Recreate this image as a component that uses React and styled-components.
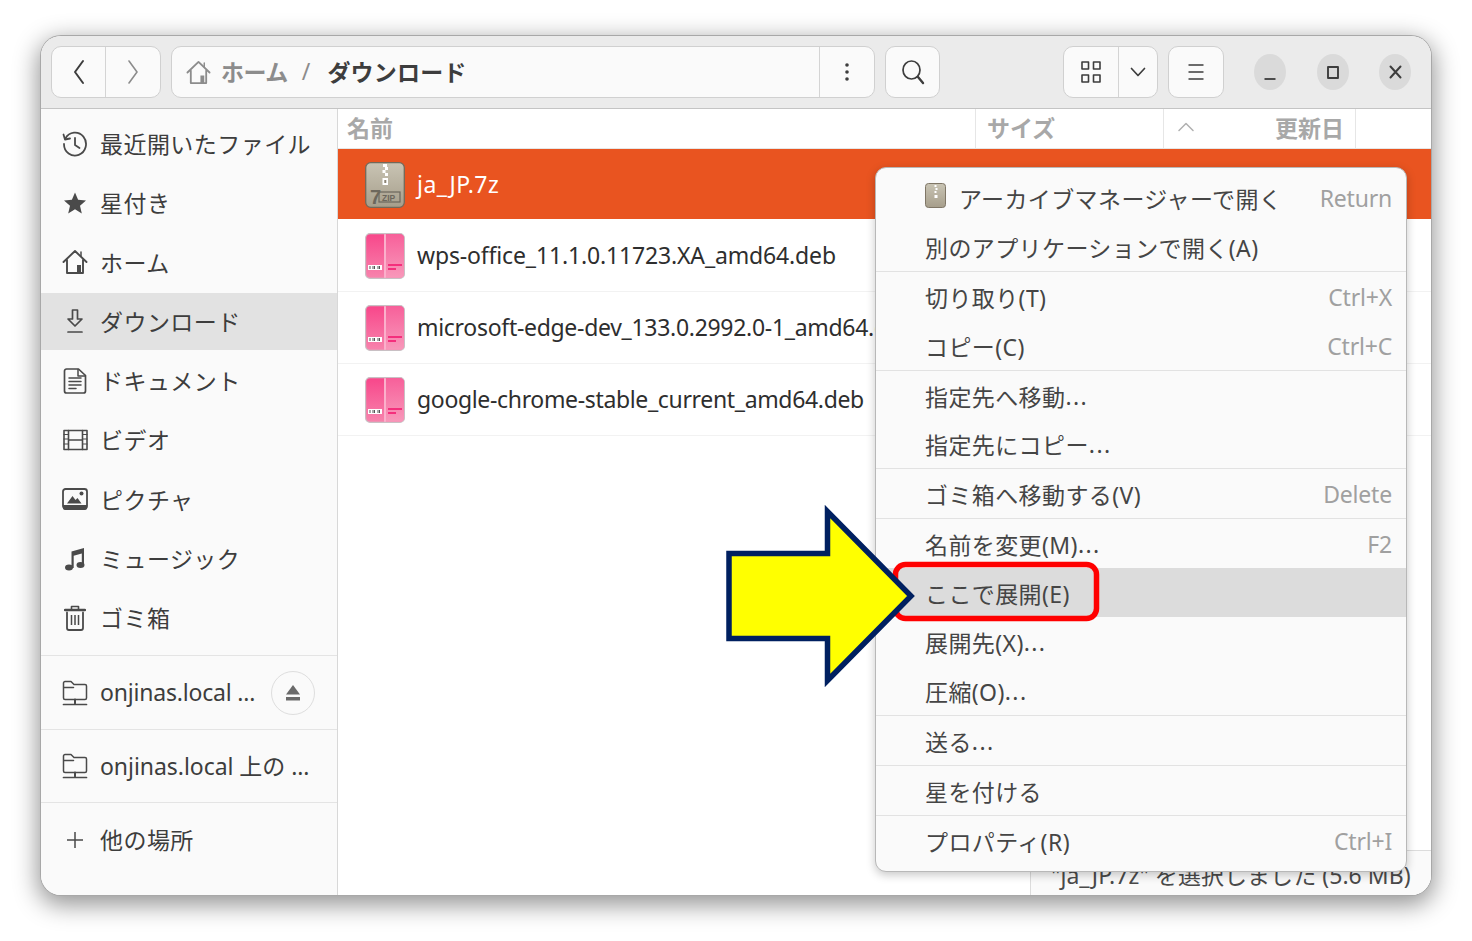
import React from "react";
import styled, { createGlobalStyle } from "styled-components";

const FONT = '"Noto Sans", "Noto Sans CJK JP", sans-serif';

const Global = createGlobalStyle`
  html, body { margin: 0; padding: 0; background: #fff; }
  body { font-family: ${FONT}; }
  * { box-sizing: border-box; }
`;

const Page = styled.div`
  width: 1472px;
  height: 941px;
  padding: 36px 41px 46px;
  overflow: hidden;
`;
const Win = styled.div`
  position: relative;
  width: 1390px;
  height: 859px;
  border-radius: 20px;
  background: #fff;
  box-shadow: 0 0 0 1px #a8a8a8, 0 7px 24px 3px rgba(0, 0, 0, 0.42);
  display: flex;
  flex-direction: column;
`;
const Header = styled.header`
  height: 73px;
  flex: none;
  display: flex;
  align-items: flex-start;
  padding: 10px 20px 0 10px;
  background: #ebebeb;
  border-bottom: 1px solid #c4c4c4;
  border-radius: 20px 20px 0 0;
`;
const BtnGroup = styled.div`
  display: flex;
  height: 52px;
  background: #fafafa;
  border: 1px solid #d0d0d0;
  border-radius: 10px;
  margin-right: ${(p) => p.$mr || 0}px;
  width: ${(p) => p.$w || "auto"}${(p) => (p.$w ? "px" : "")};
  flex: none;
  overflow: hidden;
`;
const Btn = styled.div`
  width: ${(p) => p.$w}px;
  flex: none;
  display: flex;
  align-items: center;
  justify-content: center;
  border-left: ${(p) => (p.$sep ? "1px solid #d4d4d4" : "none")};
  color: ${(p) => p.$color || "#3d3d3d"};
`;
const PathTrail = styled.div`
  flex: 1;
  display: flex;
  align-items: center;
  padding-left: 14px;
  font-size: 23px;
  font-weight: 700;
  color: #8c8c8c;
`;
const PathHome = styled.span`
  margin: -2px 0 0 10px;
  letter-spacing: -0.5px;
`;
const PathSlash = styled.span`
  margin: -2px 17px 0 14px;
  font-weight: 400;
`;
const PathCurrent = styled.span`
  margin-top: -2px;
  letter-spacing: 0.2px;
  color: #3d3d3d;
`;
const Spacer = styled.div`
  flex: 1;
`;
const WinButton = styled.div`
  width: 32px;
  height: 36px;
  border-radius: 50%;
  background: #dadada;
  margin: 8px 0 0 ${(p) => p.$ml}px;
  flex: none;
  display: flex;
  align-items: center;
  justify-content: center;
  color: #3d3d3d;
`;
const Body = styled.div`
  flex: 1;
  min-height: 0;
  display: flex;
`;
const Side = styled.aside`
  width: 297px;
  flex: none;
  background: #fafafa;
  border-right: 1px solid #d8d8d8;
  border-radius: 0 0 0 20px;
  padding-top: 6px;
  font-size: 23px;
  color: #3d3d3d;
`;
const SideItem = styled.div`
  height: 57px;
  margin-bottom: 2.3px;
  display: flex;
  align-items: center;
  padding-left: 20px;
  background: ${(p) => (p.$active ? "#e2e2e2" : "transparent")};
`;
const SideIcon = styled.span`
  width: 28px;
  height: 30px;
  flex: none;
  margin-right: 11px;
  display: flex;
  align-items: center;
  justify-content: center;
  color: #4a4a4a;
`;
const SideSep = styled.div`
  height: 1px;
  background: #e4e4e4;
  margin-top: ${(p) => p.$mt || 0}px;
`;
const SideRow = styled.div`
  height: ${(p) => p.$h}px;
  display: flex;
  align-items: center;
  padding-left: 20px;
`;
const SideText = styled.span`
  flex: 1;
  margin-top: ${(p) => p.$mt ?? -1}px;
  white-space: nowrap;
  letter-spacing: ${(p) => p.$ls}px;
`;
const Eject = styled.span`
  width: 44px;
  height: 44px;
  border: 1px solid #dedede;
  border-radius: 50%;
  margin-right: 22px;
  display: flex;
  align-items: center;
  justify-content: center;
  color: #6a6a6a;
`;
const Main = styled.main`
  flex: 1;
  min-width: 0;
  position: relative;
  background: #fff;
  border-radius: 0 0 20px 0;
`;
const ColHead = styled.div`
  height: 40px;
  display: flex;
  font-size: 23px;
  font-weight: 700;
  color: #a8a8a8;
  border-bottom: 1px solid #e6e6e6;
`;
const Col = styled.div`
  width: ${(p) => p.$w}px;
  flex: none;
  display: flex;
  align-items: center;
  padding: 0 ${(p) => p.$pr || 0}px 4px ${(p) => p.$pl || 0}px;
  justify-content: space-between;
  border-right: ${(p) => (p.$sep ? "1px solid #e6e6e6" : "none")};
`;
const FileRow = styled.div`
  height: ${(p) => p.$h}px;
  display: flex;
  align-items: center;
  padding-left: 27px;
  font-size: 23px;
  white-space: nowrap;
  color: ${(p) => (p.$selected ? "#fff" : "#2e2e2e")};
  background: ${(p) => (p.$selected ? "linear-gradient(#e95420 70px, #fff 70px)" : "#fff")};
  border-bottom: ${(p) => (p.$selected ? "none" : "1px solid #f2f2f2")};
`;
const FileName = styled.span`
  margin: -2px 0 0 12px;
  letter-spacing: ${(p) => p.$ls}px;
`;
const Status = styled.div`
  position: absolute;
  right: 0;
  bottom: 0;
  width: 401px;
  height: 45px;
  padding: 9px 0 0 20px;
  font-size: 23px;
  line-height: 30px;
  letter-spacing: 0.05px;
  white-space: nowrap;
  color: #4a4a4a;
  background: #fafafa;
  border-top: 1px solid #dcdcdc;
  border-left: 1px solid #dcdcdc;
  border-radius: 0 0 20px 0;
`;
const Menu = styled.div`
  position: absolute;
  left: 834px;
  top: 131px;
  width: 532px;
  height: 705px;
  padding: 5px 0;
  background: #fafafa;
  border: 1px solid #b8b8b8;
  border-radius: 11px;
  box-shadow: 0 3px 10px rgba(0, 0, 0, 0.22);
  font-size: 23px;
  color: #454545;
`;
const MenuRow = styled.div`
  height: 48.9px;
  display: flex;
  align-items: center;
  justify-content: space-between;
  padding: 1px 14px 0 49px;
  white-space: nowrap;
  background: ${(p) => (p.$hl ? "#dcdcdc" : "transparent")};
`;
const MenuLabel = styled.span`
  display: flex;
  align-items: center;
  letter-spacing: 0.4px;
`;
const Dots = styled.span`
  letter-spacing: 1.4px;
`;
const MenuIcon = styled.span`
  display: flex;
  margin-right: 13px;
  margin-top: -4px;
`;
const Shortcut = styled.span`
  color: #a0a0a0;
  letter-spacing: -0.2px;
`;
const MenuSep = styled.div`
  height: 1px;
  background: #e2e2e2;
`;
const Callout = styled.svg`
  position: absolute;
  left: 0;
  top: 0;
  pointer-events: none;
`;

const S = { fill: "none", stroke: "currentColor", strokeWidth: 2, strokeLinecap: "round", strokeLinejoin: "round" };

const Back = () => (
  <svg width="14" height="26" viewBox="0 0 14 26"><path d="M11 2 3 13l8 11" {...S} /></svg>
);
const Forward = () => (
  <svg width="14" height="26" viewBox="0 0 14 26"><path d="M3 2l8 11-8 11" {...S} strokeWidth="1.6" /></svg>
);
const Home = ({ size = 26 }) => (
  <svg width={size} height={size} viewBox="0 0 26 26">
    <path d="M1.5 13 13 2l11.500 11M5 11v13h16V11" {...S} strokeWidth="1.900" />
    <path d="M15 24v-8h4v8z" fill="currentColor" />
    <path d="M19 3v4" {...S} strokeWidth="1.500" />
  </svg>
);
const Kebab = () => (
  <svg width="6" height="20" viewBox="0 0 6 20">
    <circle cx="3" cy="3" r="1.800" fill="currentColor" />
    <circle cx="3" cy="10" r="1.800" fill="currentColor" />
    <circle cx="3" cy="17" r="1.800" fill="currentColor" />
  </svg>
);
const Search = () => (
  <svg width="24" height="26" viewBox="0 0 24 26">
    <ellipse cx="10.500" cy="11" rx="8.500" ry="9" {...S} strokeWidth="1.700" />
    <path d="M17 18l5 6" {...S} strokeWidth="2.400" />
  </svg>
);
const Grid = () => (
  <svg width="20" height="22" viewBox="0 0 20 22">
    <g {...S} strokeWidth="1.600" strokeLinecap="butt">
      <rect x="1" y="1" width="6.500" height="7" />
      <rect x="12.500" y="1" width="6.500" height="7" />
      <rect x="1" y="14" width="6.500" height="7" />
      <rect x="12.500" y="14" width="6.500" height="7" />
    </g>
  </svg>
);
const Chevron = () => (
  <svg width="16" height="12" viewBox="0 0 16 12"><path d="M1.500 2.500 8 9.500l6.500-7" {...S} strokeWidth="1.700" /></svg>
);
const Burger = () => (
  <svg width="16" height="18" viewBox="0 0 16 18"><path d="M0.500 2h15M0.500 9h15M0.500 16h15" {...S} strokeWidth="1.700" strokeLinecap="butt" /></svg>
);
const Minimize = () => (
  <svg width="12" height="18" viewBox="0 0 12 18"><path d="M0.500 16h11" {...S} strokeWidth="1.800" strokeLinecap="butt" /></svg>
);
const Maximize = () => (
  <svg width="12" height="13" viewBox="0 0 12 13"><rect x="1" y="1" width="10" height="11" {...S} strokeWidth="1.900" strokeLinecap="butt" /></svg>
);
const CloseX = () => (
  <svg width="13" height="14" viewBox="0 0 13 14"><path d="M1.500 1.500l10 11M11.500 1.500l-10 11" {...S} strokeWidth="2" /></svg>
);
const Clock = () => (
  <svg width="26" height="26" viewBox="0 0 26 26">
    <path d="M3.400 7.500A11 11.500 0 1 1 2 13" {...S} strokeWidth="1.800" />
    <path d="M1.500 3.500 3 8.500 8 7.500" {...S} strokeWidth="1.800" />
    <path d="M13 7v7l4.500 3" {...S} strokeWidth="1.800" />
  </svg>
);
const Star = () => (
  <svg width="24" height="24" viewBox="0 0 24 24">
    <path d="M12 1.500l3.100 7.300 7.900.7-6 5.200 1.800 7.800L12 18.300 5.200 22.500 7 14.700 1 9.500l7.900-.7z" fill="currentColor" />
  </svg>
);
const DownloadIco = () => (
  <svg width="20" height="26" viewBox="0 0 20 26">
    <path d="M7.500 2h5v9H17l-7 7-7-7h4.500zM3 24h14" {...S} strokeWidth="1.700" />
  </svg>
);
const Doc = () => (
  <svg width="24" height="26" viewBox="0 0 24 26">
    <path d="M3.500 1h12L22.500 7.500V23a2 2 0 0 1-2 2h-17a2 2 0 0 1-2-2V3a2 2 0 0 1 2-2z" {...S} strokeWidth="1.700" />
    <path d="M15 1.500V8h7M6 10h12M6 13.500h12M6 17h12M6 20.500h7" {...S} strokeWidth="1.500" />
  </svg>
);
const Film = () => (
  <svg width="25" height="22" viewBox="0 0 25 22">
    <path d="M1 1.500h23v19H1z" {...S} strokeWidth="1.600" />
    <path d="M5.500 1.500v19M19.500 1.500v19M5.500 11h14" {...S} strokeWidth="1.600" />
    <path d="M1 5.500h4M1 10h4M1 15h4M20 5.500h4M20 10h4M20 15h4" {...S} strokeWidth="1.200" />
  </svg>
);
const Picture = () => (
  <svg width="26" height="22" viewBox="0 0 26 22">
    <rect x="1" y="1" width="24" height="19.500" rx="2.500" {...S} strokeWidth="1.800" />
    <path d="M1 17h24v3a2 2 0 0 1-2 2H3a2 2 0 0 1-2-2z" fill="currentColor" />
    <path d="M5 15.500 10.500 8l3 4 2-2 4 5.500z" fill="currentColor" />
    <circle cx="19.500" cy="5.500" r="2" fill="currentColor" />
  </svg>
);
const Music = () => (
  <svg width="22" height="24" viewBox="0 0 22 24">
    <path d="M7.500 4.500 20 1v17h-2.200V6.500L9.700 8.700V21H7.500z" fill="currentColor" />
    <ellipse cx="5" cy="20.500" rx="4" ry="3" fill="currentColor" />
    <ellipse cx="16.500" cy="18" rx="4" ry="3" fill="currentColor" />
  </svg>
);
const Trash = () => (
  <svg width="22" height="26" viewBox="0 0 22 26">
    <path d="M1 5h20" {...S} strokeWidth="2.400" />
    <path d="M7.500 4V1.500h7V4" {...S} strokeWidth="1.600" />
    <path d="M3 7.500V23a2 2 0 0 0 2 2h12a2 2 0 0 0 2-2V7.500" {...S} strokeWidth="1.800" />
    <path d="M7.500 10v10M11 10v10M14.500 10v10" {...S} strokeWidth="1.500" strokeLinecap="butt" />
  </svg>
);
const NetFolder = () => (
  <svg width="26" height="26" viewBox="0 0 26 26">
    <path d="M1.500 18V3a1.500 1.500 0 0 1 1.500-1.500h6L12 4.500h11A1.500 1.500 0 0 1 24.500 6v12A1.500 1.500 0 0 1 23 19.500H3A1.500 1.500 0 0 1 1.500 18zM1.500 7.500h10" {...S} strokeWidth="1.500" />
    <path d="M1.500 24.500h23" {...S} strokeWidth="1.700" />
    <path d="M13 19.500v4" {...S} strokeWidth="2" />
  </svg>
);
const Plus = () => (
  <svg width="18" height="18" viewBox="0 0 18 18"><path d="M9 1v16M1 9h16" {...S} strokeWidth="1.500" strokeLinecap="butt" /></svg>
);
const EjectIco = () => (
  <svg width="14" height="16" viewBox="0 0 14 16">
    <path d="M7 0l7 9.500H0z" fill="currentColor" />
    <rect y="12" width="14" height="3.500" fill="currentColor" />
  </svg>
);
const Caret = () => (
  <svg width="16" height="10" viewBox="0 0 16 10"><path d="M1 8.500 8 1.500l7 7" {...S} strokeWidth="1.500" stroke="#b0b0b0" /></svg>
);
const ZipIcon = () => (
  <svg width="40" height="46" viewBox="0 0 40 46">
    <defs>
      <linearGradient id="zipg" x1="0" y1="0" x2="0" y2="1">
        <stop offset="0" stopColor="#c9c4b4" />
        <stop offset="1" stopColor="#a69e8b" />
      </linearGradient>
    </defs>
    <rect x="0.700" y="0.700" width="38.600" height="44.600" rx="5" fill="url(#zipg)" stroke="#72695a" strokeWidth="1.300" />
    <path d="M18 2h4v3h-4zM20 5h3v3h-3zM17.500 8h3v3h-3zM20 11h3v3h-3z" fill="#fff" />
    <rect x="17.500" y="16" width="5.500" height="7" fill="#fff" />
    <rect x="19.300" y="18" width="2" height="3" fill="#8c8474" />
    <rect x="14" y="30" width="21" height="10" fill="none" stroke="#6c675c" strokeWidth="1.200" />
    <text x="5" y="41.500" fontFamily="Liberation Sans" fontWeight="700" fontSize="20" fill="#6c675c">7</text>
    <text x="17" y="38.500" fontFamily="Liberation Sans" fontWeight="700" fontSize="8.500" fill="#6c675c">ZIP</text>
  </svg>
);
const DebIcon = ({ id }) => (
  <svg width="40" height="46" viewBox="0 0 40 46">
    <defs>
      <linearGradient id={id + "l"} x1="0" y1="0" x2="0" y2="1">
        <stop offset="0" stopColor="#f8468a" />
        <stop offset="1" stopColor="#f784ad" />
      </linearGradient>
      <linearGradient id={id + "r"} x1="0" y1="0" x2="0" y2="1">
        <stop offset="0" stopColor="#f7609a" />
        <stop offset="1" stopColor="#f898ba" />
      </linearGradient>
    </defs>
    <rect x="0.600" y="0.600" width="38.800" height="44.800" rx="4.500" fill={`url(#${id}l)`} stroke="#c9c0c4" strokeWidth="1.200" />
    <path d="M21 1.200h14a4 4 0 0 1 4 4v35.600a4 4 0 0 1-4 4H21z" fill={`url(#${id}r)`} />
    <rect x="19" y="1.200" width="2" height="43.600" fill="#fbb0cb" />
    <rect x="3" y="32" width="14" height="5" fill="#fff" />
    <path d="M5 33v3M8 33v3M9.500 33v3M13 33v3M14.500 33v3" stroke="#555" strokeWidth="1" />
    <rect x="23" y="31" width="14" height="2" fill="#f42f7c" />
    <rect x="23" y="35" width="8" height="2" fill="#f42f7c" />
  </svg>
);
const ZipMini = () => (
  <svg width="21" height="25" viewBox="0 0 21 25">
    <defs>
      <linearGradient id="zipm" x1="0" y1="0" x2="0" y2="1">
        <stop offset="0" stopColor="#c9c4b4" />
        <stop offset="1" stopColor="#a69e8b" />
      </linearGradient>
    </defs>
    <rect x="0.500" y="0.500" width="20" height="24" rx="3" fill="url(#zipm)" stroke="#7f7666" />
    <path d="M9.500 2h2v2h-2zM10.500 5h2v2h-2zM9.500 8h2v2h-2zM9.500 12h3v3h-3z" fill="#fff" />
  </svg>
);

const places = [
  ["最近開いたファイル", <Clock />],
  ["星付き", <Star />],
  ["ホーム", <Home />],
  ["ダウンロード", <DownloadIco />],
  ["ドキュメント", <Doc />],
  ["ビデオ", <Film />],
  ["ピクチャ", <Picture />],
  ["ミュージック", <Music />],
  ["ゴミ箱", <Trash />],
];

const files = [
  ["wps-office_11.1.0.11723.XA_amd64.deb", -0.15],
  ["microsoft-edge-dev_133.0.2992.0-1_amd64.deb", -0.3],
  ["google-chrome-stable_current_amd64.deb", -0.34],
];

const menuGroups = [
  [
    { label: "アーカイブマネージャーで開く", key: "Return", icon: true },
    { label: "別のアプリケーションで開く(A)" },
  ],
  [
    { label: "切り取り(T)", key: "Ctrl+X" },
    { label: "コピー(C)", key: "Ctrl+C" },
  ],
  [{ label: "指定先へ移動", more: true }, { label: "指定先にコピー", more: true }],
  [{ label: "ゴミ箱へ移動する(V)", key: "Delete" }],
  [
    { label: "名前を変更(M)", key: "F2", more: true },
    { label: "ここで展開(E)", hl: true },
    { label: "展開先(X)", more: true },
    { label: "圧縮(O)", more: true },
  ],
  [{ label: "送る", more: true }],
  [{ label: "星を付ける" }],
  [{ label: "プロパティ(R)", key: "Ctrl+I" }],
];

export default function App() {
  return (
    <Page>
      <Global />
      <Win>
        <Header>
          <BtnGroup $mr={10}>
            <Btn $w={53}><Back /></Btn>
            <Btn $w={55} $sep $color="#8c8c8c"><Forward /></Btn>
          </BtnGroup>
          <BtnGroup $w={704} $mr={10}>
            <PathTrail>
              <Home size={25} />
              <PathHome>ホーム</PathHome>
              <PathSlash>/</PathSlash>
              <PathCurrent>ダウンロード</PathCurrent>
            </PathTrail>
            <Btn $w={55} $sep><Kebab /></Btn>
          </BtnGroup>
          <BtnGroup>
            <Btn $w={53}><Search /></Btn>
          </BtnGroup>
          <Spacer />
          <BtnGroup $mr={10}>
            <Btn $w={54}><Grid /></Btn>
            <Btn $w={39} $sep><Chevron /></Btn>
          </BtnGroup>
          <BtnGroup>
            <Btn $w={54}><Burger /></Btn>
          </BtnGroup>
          <WinButton $ml={30}><Minimize /></WinButton>
          <WinButton $ml={31}><Maximize /></WinButton>
          <WinButton $ml={30}><CloseX /></WinButton>
        </Header>
        <Body>
          <Side>
            {places.map(([label, icon], i) => (
              <SideItem key={label} $active={label === "ダウンロード"}>
                <SideIcon>{icon}</SideIcon>
                <SideText $ls={0.45} $mt={i === 0 ? -2 : -1}>{label}</SideText>
              </SideItem>
            ))}
            <SideSep $mt={9} />
            <SideRow $h={73}>
              <SideIcon><NetFolder /></SideIcon>
              <SideText $ls={-0.2} $mt={-2}>onjinas.local ...</SideText>
              <Eject><EjectIco /></Eject>
            </SideRow>
            <SideSep />
            <SideRow $h={72}>
              <SideIcon><NetFolder /></SideIcon>
              <SideText $ls={-0.05} $mt={-2}>onjinas.local 上の ...</SideText>
            </SideRow>
            <SideSep />
            <SideRow $h={74}>
              <SideIcon><Plus /></SideIcon>
              <SideText $ls={0.45} $mt={-2}>他の場所</SideText>
            </SideRow>
          </Side>
          <Main>
            <ColHead>
              <Col $w={638} $pl={9} $sep>名前</Col>
              <Col $w={188} $pl={11} $sep>サイズ</Col>
              <Col $w={192} $pl={14} $pr={11} $sep><Caret />更新日</Col>
            </ColHead>
            <FileRow $h={71} $selected>
              <ZipIcon />
              <FileName $ls={0.45}>ja_JP.7z</FileName>
            </FileRow>
            {files.map(([f, ls], i) => (
              <FileRow key={f} $h={72}>
                <DebIcon id={"deb" + i} />
                <FileName $ls={ls}>{f}</FileName>
              </FileRow>
            ))}
            <Status>"ja_JP.7z" を選択しました (5.6 MB)</Status>
          </Main>
        </Body>
        <Menu>
          {menuGroups.map((g, i) => (
            <React.Fragment key={i}>
              {i > 0 && <MenuSep />}
              {g.map((m) => (
                <MenuRow key={m.label} $hl={m.hl}>
                  <MenuLabel>
                    {m.icon && <MenuIcon><ZipMini /></MenuIcon>}
                    {m.label}
                    {m.more && <Dots>...</Dots>}
                  </MenuLabel>
                  {m.key && <Shortcut>{m.key}</Shortcut>}
                </MenuRow>
              ))}
            </React.Fragment>
          ))}
        </Menu>
        <Callout width="1390" height="859" viewBox="41 36 1390 859">
          <rect x="895.500" y="564.500" width="201" height="54" rx="10" fill="none" stroke="#ff0000" strokeWidth="5.500" />
          <path d="M729 553.500h98.500V511.500L911 596l-83.500 84.500V638.500H729z" fill="#ffff00" stroke="#002060" strokeWidth="5.500" strokeMiterlimit="10" />
        </Callout>
      </Win>
    </Page>
  );
}
